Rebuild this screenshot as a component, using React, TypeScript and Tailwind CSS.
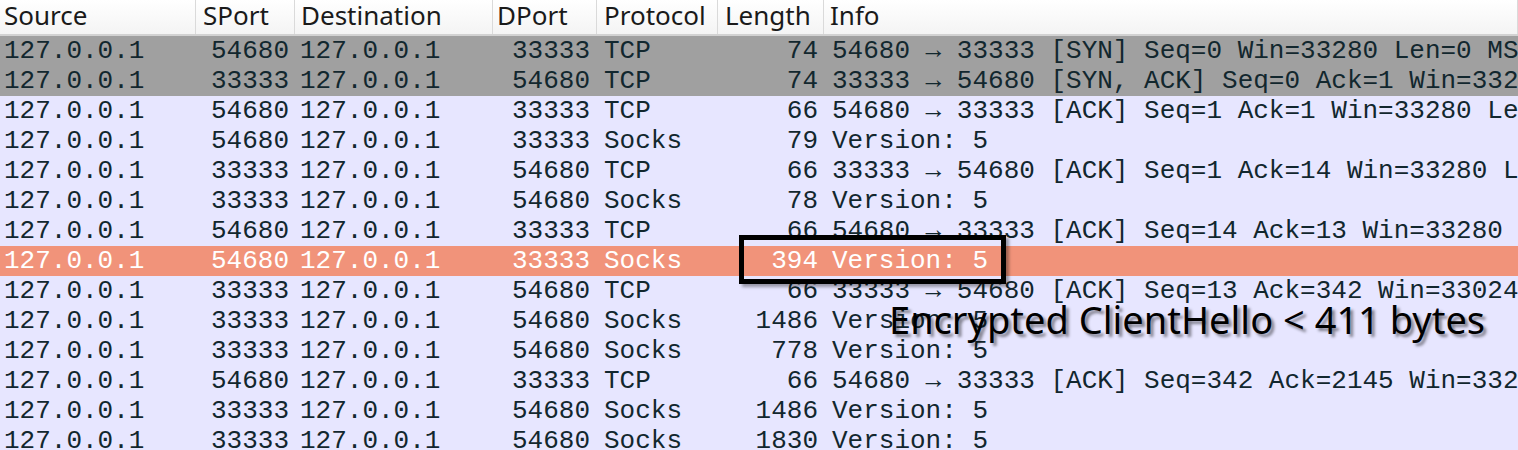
const columns = [
  { label: 'Source', w: 'w-[196px]', hp: 'pl-[4px]' },
  { label: 'SPort', w: 'w-[99px]', hp: 'pl-[7px]' },
  { label: 'Destination', w: 'w-[198px]', hp: 'pl-[6px]' },
  { label: 'DPort', w: 'w-[104px]', hp: 'pl-[4px]' },
  { label: 'Protocol', w: 'w-[121px]', hp: 'pl-[7px]' },
  { label: 'Length', w: 'w-[106px]', hp: 'pl-[7px]' },
  { label: 'Info', w: 'flex-1', hp: 'pl-[6px]' },
]

type Packet = {
  sport: string
  dport: string
  proto: string
  len: string
  info: string
  kind?: 'syn' | 'mark'
}

const packets: Packet[] = [
  { sport: '54680', dport: '33333', proto: 'TCP', len: '74', info: '54680 → 33333 [SYN] Seq=0 Win=33280 Len=0 MSS=65495 SACK_PERM TSval', kind: 'syn' },
  { sport: '33333', dport: '54680', proto: 'TCP', len: '74', info: '33333 → 54680 [SYN, ACK] Seq=0 Ack=1 Win=33280 Len=0 MSS=65495', kind: 'syn' },
  { sport: '54680', dport: '33333', proto: 'TCP', len: '66', info: '54680 → 33333 [ACK] Seq=1 Ack=1 Win=33280 Len=0 TSval' },
  { sport: '54680', dport: '33333', proto: 'Socks', len: '79', info: 'Version: 5' },
  { sport: '33333', dport: '54680', proto: 'TCP', len: '66', info: '33333 → 54680 [ACK] Seq=1 Ack=14 Win=33280 Len=0 TSval' },
  { sport: '33333', dport: '54680', proto: 'Socks', len: '78', info: 'Version: 5' },
  { sport: '54680', dport: '33333', proto: 'TCP', len: '66', info: '54680 → 33333 [ACK] Seq=14 Ack=13 Win=33280 Len=0 TSval' },
  { sport: '54680', dport: '33333', proto: 'Socks', len: '394', info: 'Version: 5', kind: 'mark' },
  { sport: '33333', dport: '54680', proto: 'TCP', len: '66', info: '33333 → 54680 [ACK] Seq=13 Ack=342 Win=33024 Len=0 TSval' },
  { sport: '33333', dport: '54680', proto: 'Socks', len: '1486', info: 'Version: 5' },
  { sport: '33333', dport: '54680', proto: 'Socks', len: '778', info: 'Version: 5' },
  { sport: '54680', dport: '33333', proto: 'TCP', len: '66', info: '54680 → 33333 [ACK] Seq=342 Ack=2145 Win=33280 Len=0 TSval' },
  { sport: '33333', dport: '54680', proto: 'Socks', len: '1486', info: 'Version: 5' },
  { sport: '33333', dport: '54680', proto: 'Socks', len: '1830', info: 'Version: 5' },
]

function rowColor(kind?: Packet['kind']) {
  if (kind === 'syn') return 'bg-[#a0a0a0] text-[#12272e]'
  if (kind === 'mark') return 'bg-[#f1937a] text-white'
  return 'bg-[#e7e6ff] text-[#12272e]'
}

function PacketRow({ p }: { p: Packet }) {
  return (
    <div className={`flex h-[30px] whitespace-nowrap pt-[1px] ${rowColor(p.kind)}`}>
      <div className="w-[196px] shrink-0 pl-[4px]">127.0.0.1</div>
      <div className="w-[99px] shrink-0 pr-[6px] text-right">{p.sport}</div>
      <div className="w-[198px] shrink-0 pl-[5px]">127.0.0.1</div>
      <div className="w-[104px] shrink-0 pr-[7px] text-right">{p.dport}</div>
      <div className="w-[121px] shrink-0 pl-[7px]">{p.proto}</div>
      <div className="w-[106px] shrink-0 pr-[6px] text-right">{p.len}</div>
      <div className="min-w-0 flex-1 overflow-hidden pl-[8px]">{p.info}</div>
    </div>
  )
}

export default function App() {
  return (
    <div className="relative h-[450px] w-[1518px] overflow-hidden bg-[#e7e6ff]">
      <div className="flex h-[36px] border-b-2 border-[#d2d2d2] bg-gradient-to-b from-white to-[#f4f4f4] font-['Noto_Sans',sans-serif] text-[26px] leading-[30px] text-[#1a1a1a]">
        {columns.map((c) => (
          <div
            key={c.label}
            className={`${c.w} shrink-0 border-r border-[#dadada] ${c.hp}`}
          >
            {c.label}
          </div>
        ))}
      </div>

      <div className="font-['Liberation_Mono',monospace] text-[26px] leading-[28px]">
        {packets.map((p, i) => (
          <PacketRow key={i} p={p} />
        ))}
      </div>

      <div className="absolute left-[739px] top-[235px] h-[49px] w-[267px] border-[5px] border-black shadow-[3px_3px_3px_rgba(0,0,0,0.35)]" />

      <div className="absolute left-[889px] top-[300px] whitespace-nowrap font-['Noto_Sans',sans-serif] text-[38px] leading-[38px] text-black [text-shadow:3px_3px_3px_rgba(0,0,0,0.45)]">
        Encrypted ClientHello &lt; 411 bytes
      </div>
    </div>
  )
}
